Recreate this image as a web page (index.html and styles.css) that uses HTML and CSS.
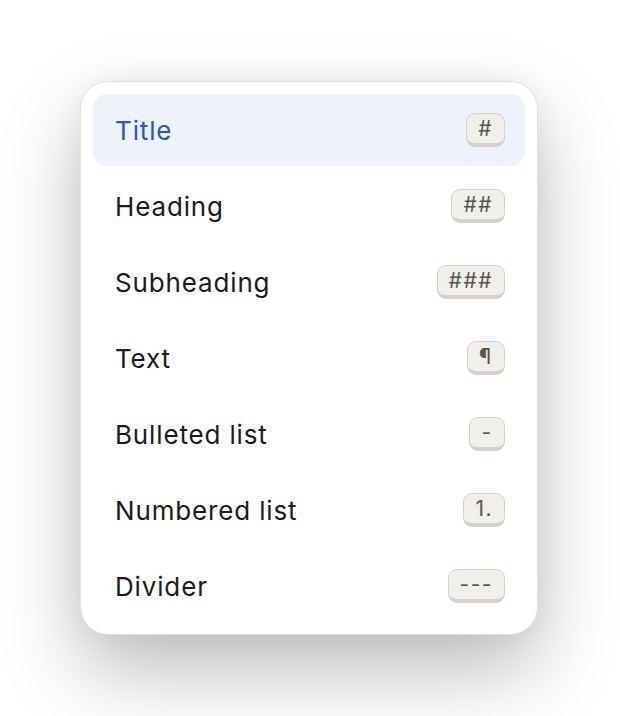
FILE: index.html
```html
<!DOCTYPE html>
<html>
<head>
<meta charset="utf-8">
<link rel="stylesheet" href="styles.css">
</head>
<body>
<div class="menu">
  <div class="item active"><span class="label">Title</span><kbd class="key">#</kbd></div>
  <div class="item"><span class="label">Heading</span><kbd class="key">##</kbd></div>
  <div class="item"><span class="label">Subheading</span><kbd class="key">###</kbd></div>
  <div class="item"><span class="label">Text</span><kbd class="key">¶</kbd></div>
  <div class="item"><span class="label">Bulleted list</span><kbd class="key">-</kbd></div>
  <div class="item"><span class="label">Numbered list</span><kbd class="key">1.</kbd></div>
  <div class="item"><span class="label">Divider</span><kbd class="key">---</kbd></div>
</div>
</body>
</html>
```
FILE: styles.css
```css
html, body {
  margin: 0;
  padding: 0;
  background: #ffffff;
}
body {
  width: 620px;
  height: 716px;
  overflow: hidden;
  font-family: Inter, "Noto Sans", sans-serif;
}
.menu {
  margin: 81px 0 0 80px;
  width: 432px;
  padding: 12px;
  border: 1.5px solid #e2e0db;
  border-radius: 28px;
  background: #ffffff;
  display: flex;
  flex-direction: column;
  gap: 4px;
  box-shadow: 0 36px 80px rgba(0, 0, 0, 0.26), 0 0 30px rgba(0, 0, 0, 0.05);
}
.item {
  height: 72px;
  display: flex;
  align-items: center;
  justify-content: space-between;
  padding: 0 20px 0 22px;
  border-radius: 14px;
}
.item.active {
  background: #edf2fd;
}
.label {
  font-size: 26px;
  color: #1b1b1b;
  letter-spacing: 0.85px;
}
.active .label {
  color: #3152c4;
}
.key {
  font-family: Inter, "Noto Sans", sans-serif;
  font-size: 21px;
  color: #56554f;
  background: #f1efea;
  border: 1.5px solid #d5d2cb;
  border-bottom-width: 4px;
  border-radius: 9px;
  min-width: 12px;
  height: 29px;
  padding: 0 11px;
  display: flex;
  align-items: center;
  justify-content: center;
  box-sizing: content-box;
  line-height: 1;
  letter-spacing: 1.5px;
}
```
